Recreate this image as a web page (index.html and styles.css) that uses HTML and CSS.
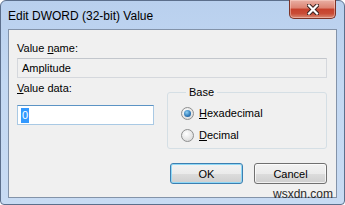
FILE: index.html
```html
<!DOCTYPE html>
<html lang="en">
<head>
    <meta charset="UTF-8">
    <title>Edit DWORD (32-bit) Value</title>
    <link rel="stylesheet" href="styles.css">
</head>
<body>
    <div class="window">
        <div class="titlebar">
            <span class="title">Edit DWORD (32-bit) Value</span>
            <button class="close" title="Close">
                <svg width="12" height="11" viewBox="0 0 12 11">
                    <path d="M2 1.5 L10 9.5 M10 1.5 L2 9.5" stroke="#3c2320" stroke-width="4.2" stroke-linecap="square" fill="none"/>
                    <path d="M2 1.5 L10 9.5 M10 1.5 L2 9.5" stroke="#ffffff" stroke-width="2.2" stroke-linecap="square" fill="none"/>
                </svg>
            </button>
        </div>
        <div class="client">
            <div class="label first">Value <u>n</u>ame:</div>
            <div class="readonly">Amplitude</div>
            <div class="middle">
                <div class="data-col">
                    <div class="label second"><u>V</u>alue data:</div>
                    <div class="edit"><span class="sel">0</span></div>
                </div>
                <fieldset class="base">
                    <legend>Base</legend>
                    <div class="radio first-radio"><span class="dot checked"></span><u>H</u>exadecimal</div>
                    <div class="radio"><span class="dot"></span><u>D</u>ecimal</div>
                </fieldset>
            </div>
            <div class="buttons">
                <button class="btn default">OK</button>
                <button class="btn">Cancel</button>
            </div>
        </div>
        <div class="watermark">wsxdn.com</div>
    </div>
</body>
</html>
```

FILE: styles.css
```css
body {
    margin: 0;
    font-family: "Liberation Sans", Arial, sans-serif;
    font-size: 11px;
    color: #000;
}
.window {
    position: relative;
    box-sizing: border-box;
    width: 345px;
    height: 205px;
    padding: 0 7px 7px 7px;
    border: 1px solid #5c6f8c;
    border-radius: 6px 6px 4px 4px;
    background: linear-gradient(#b9d0ee, #c3d8f2 40%, #c8dbf3);
}
.titlebar {
    display: flex;
    justify-content: space-between;
    height: 28px;
    margin: 0 -2px 0 0;
}
.title {
    align-self: center;
    font-size: 12px;
    line-height: 15px;
    margin-top: 2px;
}
.close {
    box-sizing: border-box;
    width: 47px;
    height: 19px;
    margin: -1px 3px 0 0;
    padding: 0;
    border: 1px solid #7c3327;
    border-top: none;
    border-radius: 0 0 5px 5px;
    background: linear-gradient(#e9b0a4, #dc8271 45%, #c6412c 50%, #c94c36 75%, #d98a74);
    box-shadow: inset 0 0 0 1px rgba(255, 220, 210, 0.45);
    display: flex;
    justify-content: center;
    align-items: center;
}
.client {
    box-sizing: border-box;
    height: 169px;
    padding: 0 9px 0 8px;
    border: 1px solid #8393a9;
    background: #f0f0f0;
}
.label {
    line-height: 15px;
}
.label.first {
    margin-top: 11px;
}
.label.second {
    margin-top: 3px;
}
.readonly {
    box-sizing: border-box;
    height: 20px;
    margin-top: 2px;
    padding: 0 4px;
    line-height: 18px;
    border: 1px solid #d5d8dd;
    border-top-color: #c2c6cc;
    background: #f0f0f0;
}
.middle {
    display: flex;
}
.data-col {
    width: 137px;
}
.edit {
    box-sizing: border-box;
    height: 20px;
    margin-top: 9px;
    padding: 2px 3px;
    border: 1px solid #a9c9e4;
    border-top-color: #5b93c4;
    background: #fff;
}
.sel {
    display: inline-block;
    height: 15px;
    line-height: 15px;
    padding: 0 1px;
    background: #3399ff;
    color: #fff;
}
.base {
    box-sizing: border-box;
    width: 160px;
    margin: 7px 0 0 13px;
    padding: 0 0 5px 13px;
    border: 1px solid #d5dfe5;
    border-radius: 3px;
}
.base legend {
    margin-left: 5px;
    padding: 0 3px;
    line-height: 15px;
    font-size: 11px;
}
.radio {
    display: flex;
    align-items: center;
    height: 16px;
    margin-top: 6px;
}
.radio.first-radio {
    margin-top: 5px;
}
.dot {
    box-sizing: border-box;
    width: 13px;
    height: 13px;
    margin-right: 5px;
    border: 1px solid #8e8f8f;
    border-radius: 50%;
    background: radial-gradient(circle at 40% 35%, #ffffff, #e4e4e4 60%, #cfcfcf);
    position: relative;
}
.dot.checked::after {
    content: "";
    position: absolute;
    left: 2px;
    top: 2px;
    width: 7px;
    height: 7px;
    border-radius: 50%;
    background: radial-gradient(circle at 40% 35%, #8fd0f4, #2d77b6 60%, #1b4f85);
}
.buttons {
    display: flex;
    justify-content: flex-end;
    gap: 11px;
    margin-top: 14px;
}
.btn {
    box-sizing: border-box;
    width: 73px;
    height: 21px;
    padding: 0;
    font-family: "Liberation Sans", Arial, sans-serif;
    font-size: 11px;
    color: #000;
    border: 1px solid #707070;
    border-radius: 3px;
    background: linear-gradient(#f2f2f2, #ebebeb 50%, #dddddd 50%, #cfcfcf);
    box-shadow: inset 0 0 0 1px rgba(255, 255, 255, 0.7);
}
.btn.default {
    border-color: #3c7fb1;
    box-shadow: inset 0 0 0 1px #8fd8f6;
}
.watermark {
    position: absolute;
    right: 11px;
    bottom: 3px;
    font-size: 12px;
    color: #2a2a2a;
}
```
